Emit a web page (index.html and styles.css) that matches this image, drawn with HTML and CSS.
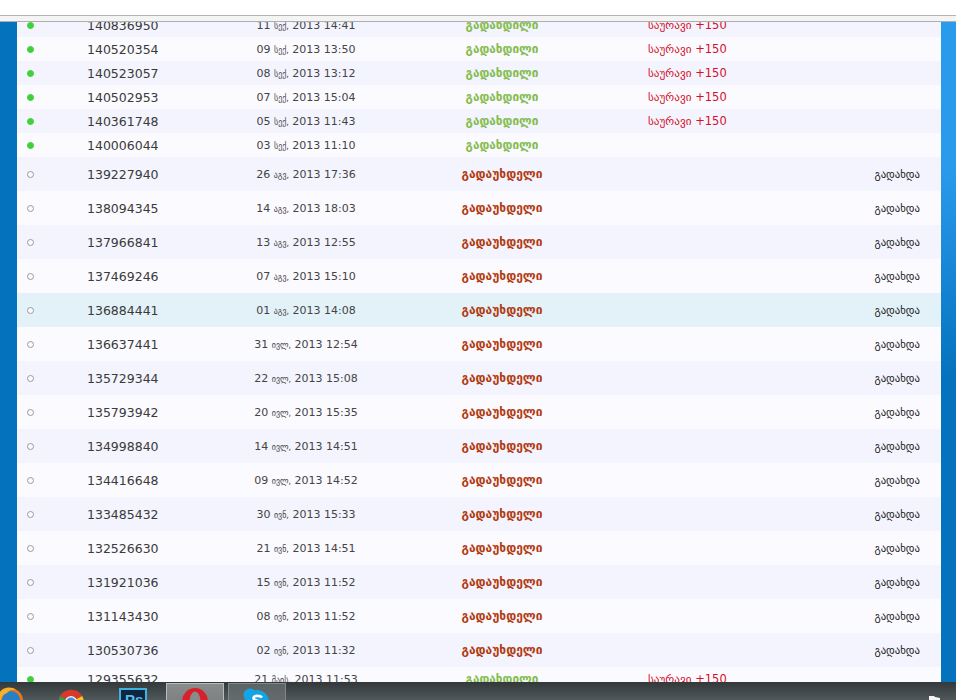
FILE: index.html
```html
<!DOCTYPE html>
<html lang="ka">
  <head>
    <meta charset="UTF-8" />
    <title>გადახდები</title>
    <link rel="stylesheet" href="styles.css">
  </head>
  <body>
    <div class="browser-bar"></div>

    <div class="page">
      <div class="side side-left"></div>
      <div class="content">
        <table class="payments">
          <colgroup>
            <col class="col-dot" />
            <col class="col-num" />
            <col class="col-date" />
            <col class="col-status" />
            <col class="col-bonus" />
            <col class="col-action" />
          </colgroup>
          <tbody>
            <tr class="short"><td><span class="dot paid"></span></td><td class="num">140836950</td><td class="date">11 <small>სექ,</small> 2013 14:41</td><td class="status paid-text">გადახდილი</td><td class="bonus"><small>საურავი</small> +150</td><td></td></tr>
            <tr class="short"><td><span class="dot paid"></span></td><td class="num">140520354</td><td class="date">09 <small>სექ,</small> 2013 13:50</td><td class="status paid-text">გადახდილი</td><td class="bonus"><small>საურავი</small> +150</td><td></td></tr>
            <tr class="short"><td><span class="dot paid"></span></td><td class="num">140523057</td><td class="date">08 <small>სექ,</small> 2013 13:12</td><td class="status paid-text">გადახდილი</td><td class="bonus"><small>საურავი</small> +150</td><td></td></tr>
            <tr class="short"><td><span class="dot paid"></span></td><td class="num">140502953</td><td class="date">07 <small>სექ,</small> 2013 15:04</td><td class="status paid-text">გადახდილი</td><td class="bonus"><small>საურავი</small> +150</td><td></td></tr>
            <tr class="short"><td><span class="dot paid"></span></td><td class="num">140361748</td><td class="date">05 <small>სექ,</small> 2013 11:43</td><td class="status paid-text">გადახდილი</td><td class="bonus"><small>საურავი</small> +150</td><td></td></tr>
            <tr class="short"><td><span class="dot paid"></span></td><td class="num">140006044</td><td class="date">03 <small>სექ,</small> 2013 11:10</td><td class="status paid-text">გადახდილი</td><td></td><td></td></tr>
            <tr><td><span class="dot"></span></td><td class="num">139227940</td><td class="date">26 <small>აგვ,</small> 2013 17:36</td><td class="status unpaid-text">გადაუხდელი</td><td></td><td class="action">გადახდა</td></tr>
            <tr><td><span class="dot"></span></td><td class="num">138094345</td><td class="date">14 <small>აგვ,</small> 2013 18:03</td><td class="status unpaid-text">გადაუხდელი</td><td></td><td class="action">გადახდა</td></tr>
            <tr><td><span class="dot"></span></td><td class="num">137966841</td><td class="date">13 <small>აგვ,</small> 2013 12:55</td><td class="status unpaid-text">გადაუხდელი</td><td></td><td class="action">გადახდა</td></tr>
            <tr><td><span class="dot"></span></td><td class="num">137469246</td><td class="date">07 <small>აგვ,</small> 2013 15:10</td><td class="status unpaid-text">გადაუხდელი</td><td></td><td class="action">გადახდა</td></tr>
            <tr class="hover"><td><span class="dot"></span></td><td class="num">136884441</td><td class="date">01 <small>აგვ,</small> 2013 14:08</td><td class="status unpaid-text">გადაუხდელი</td><td></td><td class="action">გადახდა</td></tr>
            <tr><td><span class="dot"></span></td><td class="num">136637441</td><td class="date">31 <small>ივლ,</small> 2013 12:54</td><td class="status unpaid-text">გადაუხდელი</td><td></td><td class="action">გადახდა</td></tr>
            <tr><td><span class="dot"></span></td><td class="num">135729344</td><td class="date">22 <small>ივლ,</small> 2013 15:08</td><td class="status unpaid-text">გადაუხდელი</td><td></td><td class="action">გადახდა</td></tr>
            <tr><td><span class="dot"></span></td><td class="num">135793942</td><td class="date">20 <small>ივლ,</small> 2013 15:35</td><td class="status unpaid-text">გადაუხდელი</td><td></td><td class="action">გადახდა</td></tr>
            <tr><td><span class="dot"></span></td><td class="num">134998840</td><td class="date">14 <small>ივლ,</small> 2013 14:51</td><td class="status unpaid-text">გადაუხდელი</td><td></td><td class="action">გადახდა</td></tr>
            <tr><td><span class="dot"></span></td><td class="num">134416648</td><td class="date">09 <small>ივლ,</small> 2013 14:52</td><td class="status unpaid-text">გადაუხდელი</td><td></td><td class="action">გადახდა</td></tr>
            <tr><td><span class="dot"></span></td><td class="num">133485432</td><td class="date">30 <small>ივნ,</small> 2013 15:33</td><td class="status unpaid-text">გადაუხდელი</td><td></td><td class="action">გადახდა</td></tr>
            <tr><td><span class="dot"></span></td><td class="num">132526630</td><td class="date">21 <small>ივნ,</small> 2013 14:51</td><td class="status unpaid-text">გადაუხდელი</td><td></td><td class="action">გადახდა</td></tr>
            <tr><td><span class="dot"></span></td><td class="num">131921036</td><td class="date">15 <small>ივნ,</small> 2013 11:52</td><td class="status unpaid-text">გადაუხდელი</td><td></td><td class="action">გადახდა</td></tr>
            <tr><td><span class="dot"></span></td><td class="num">131143430</td><td class="date">08 <small>ივნ,</small> 2013 11:52</td><td class="status unpaid-text">გადაუხდელი</td><td></td><td class="action">გადახდა</td></tr>
            <tr><td><span class="dot"></span></td><td class="num">130530736</td><td class="date">02 <small>ივნ,</small> 2013 11:32</td><td class="status unpaid-text">გადაუხდელი</td><td></td><td class="action">გადახდა</td></tr>
            <tr class="short"><td><span class="dot paid"></span></td><td class="num">129355632</td><td class="date">21 <small>მაის,</small> 2013 11:53</td><td class="status paid-text">გადახდილი</td><td class="bonus"><small>საურავი</small> +150</td><td></td></tr>
          </tbody>
        </table>
      </div>
      <div class="side side-right"></div>
    </div>

    <div class="taskbar">
      <svg class="icon firefox" viewBox="0 0 28 28">
        <circle cx="14" cy="14" r="13" fill="#e8761c" />
        <circle cx="15" cy="13" r="9" fill="#2a7fc4" />
        <path d="M3 6c4-6 12-7 17-3-4-1-7 0-9 3-3 1-6 3-6 8-2-2-3-5-2-8z" fill="#f6b12c" />
      </svg>
      <svg class="icon chrome" viewBox="0 0 28 28">
        <path d="M14 14 3 8a13 13 0 0 1 22.300 0z" fill="#d8392c" />
        <path d="M14 14 25.300 8a13 13 0 0 1-11.300 19z" fill="#f2c42e" />
        <path d="M14 14v13A13 13 0 0 1 3 8z" fill="#3b9a45" />
        <circle cx="14" cy="14" r="6" fill="#e8eef4" />
        <circle cx="14" cy="14" r="4.500" fill="#4a89dc" />
      </svg>
      <svg class="icon ps" viewBox="0 0 28 28">
        <rect x="1" y="1" width="26" height="26" fill="#10253f" stroke="#3fb2e2" stroke-width="2" />
        <text x="6" y="17" class="ps-text">Ps</text>
      </svg>
      <div class="task-btn active">
        <svg class="icon" viewBox="0 0 28 28">
          <ellipse cx="14" cy="14" rx="13" ry="14" fill="#d8202a" />
          <ellipse cx="14" cy="14" rx="5.500" ry="10.500" fill="#8a8c8c" />
        </svg>
      </div>
      <div class="task-btn">
        <svg class="icon" viewBox="0 0 28 28">
          <circle cx="14" cy="14" r="12" fill="#12a5e6" />
          <circle cx="7" cy="7" r="6.500" fill="#12a5e6" />
          <path d="M19 9.500c-1.500-2-8-2.500-8.500.5-.4 3 8 2.300 8 5.500 0 3-6.500 3-8.500.5" fill="none" stroke="#fff" stroke-width="2.600" />
        </svg>
      </div>
      <svg class="tray-flag" viewBox="0 0 14 8">
        <path d="M1 0h5l1 1 5 1v6H1z" fill="#f4f4f4" />
      </svg>
    </div>
  </body>
</html>
```

FILE: styles.css
```css
* {
  box-sizing: border-box;
}

html,
body {
  height: 100%;
}

body {
  margin: 0;
  height: 700px;
  overflow: hidden;
  display: flex;
  flex-direction: column;
  background: #fff;
  font-family: "DejaVu Sans", Verdana, sans-serif;
}

.browser-bar {
  height: 22px;
  flex-shrink: 0;
  background: linear-gradient(#fff 15px, #b4b4b4 15px, #b4b4b4 16px, #f4f4f4 16px, #f4f4f4 21px, #aeaeae 21px);
}

.page {
  display: flex;
  height: 660px;
  flex-shrink: 0;
}

.side {
  flex-shrink: 0;
}

.side-left {
  width: 17px;
  background: #0472bd;
}

.side-right {
  width: 15px;
  background: linear-gradient(#2a9aec 0, #2a9aec 22%, #0472bd 54%);
}

.content {
  flex: 1;
  overflow: hidden;
  background: #fbfaff;
}

.payments {
  width: 924px;
  margin-top: -9px;
  border-collapse: collapse;
  table-layout: fixed;
}

.col-dot {
  width: 70px;
}
.col-num {
  width: 129px;
}
.col-date {
  width: 180px;
}
.col-status {
  width: 212px;
}
.col-bonus {
  width: 220px;
}
.col-action {
  width: 113px;
}

.payments tr {
  height: 34px;
  background: #fbfaff;
}

.payments tr:nth-child(odd) {
  background: #f3f4fd;
}

.payments tr.short {
  height: 24px;
}

.payments tr.hover {
  background: #e3f2f8;
}

.payments td {
  padding: 0;
  vertical-align: middle;
  white-space: nowrap;
}

.dot {
  display: block;
  width: 7px;
  height: 7px;
  margin-left: 10px;
  border-radius: 50%;
  border: 1px solid #9a9a9a;
  background: #fbfaff;
}

.dot.paid {
  border-color: #3fd03a;
  background: #3fd03a;
}

.num {
  font-size: 12.5px;
  color: #3a3a3a;
}

.date {
  font-size: 11px;
  color: #444;
  text-align: center;
}

.date small {
  font-size: 8px;
}

.status {
  font-weight: bold;
  text-align: center;
}

.paid-text {
  font-size: 11.8px;
  color: #84bc4e;
}

.unpaid-text {
  font-size: 12px;
  color: #b23a10;
}

.payments td.bonus {
  padding-left: 40px;
  font-size: 11.5px;
  color: #d4102a;
}

.bonus small {
  font-size: 11.2px;
}

.payments td.action {
  padding-right: 21px;
  font-size: 10.7px;
  color: #222;
  text-align: right;
}

.taskbar {
  position: relative;
  height: 18px;
  flex-shrink: 0;
  overflow: hidden;
  display: flex;
  align-items: flex-start;
  background: linear-gradient(#33393a, #50585b);
}

.icon {
  display: block;
  width: 28px;
  height: 28px;
  flex-shrink: 0;
}

.firefox {
  margin: 5px 0 0 -4px;
}

.chrome {
  margin: 6px 0 0 33px;
}

.ps {
  margin: 6px 0 0 34px;
}

.ps-text {
  font-family: "Liberation Sans", sans-serif;
  font-size: 15px;
  font-weight: bold;
  fill: #52bdea;
}

.task-btn {
  width: 58px;
  height: 20px;
  margin: 1px 0 0 4px;
  padding: 4px 0 0 14px;
  border: 1px solid #80888a;
  background: linear-gradient(#5b6365, #666c6e);
}

.task-btn.active {
  margin-left: 19px;
  border-color: #b8bcbc;
  background: linear-gradient(#8a8c8c, #7c8080);
}

.tray-flag {
  position: absolute;
  left: 928px;
  top: 14px;
  width: 14px;
  height: 8px;
}
```
